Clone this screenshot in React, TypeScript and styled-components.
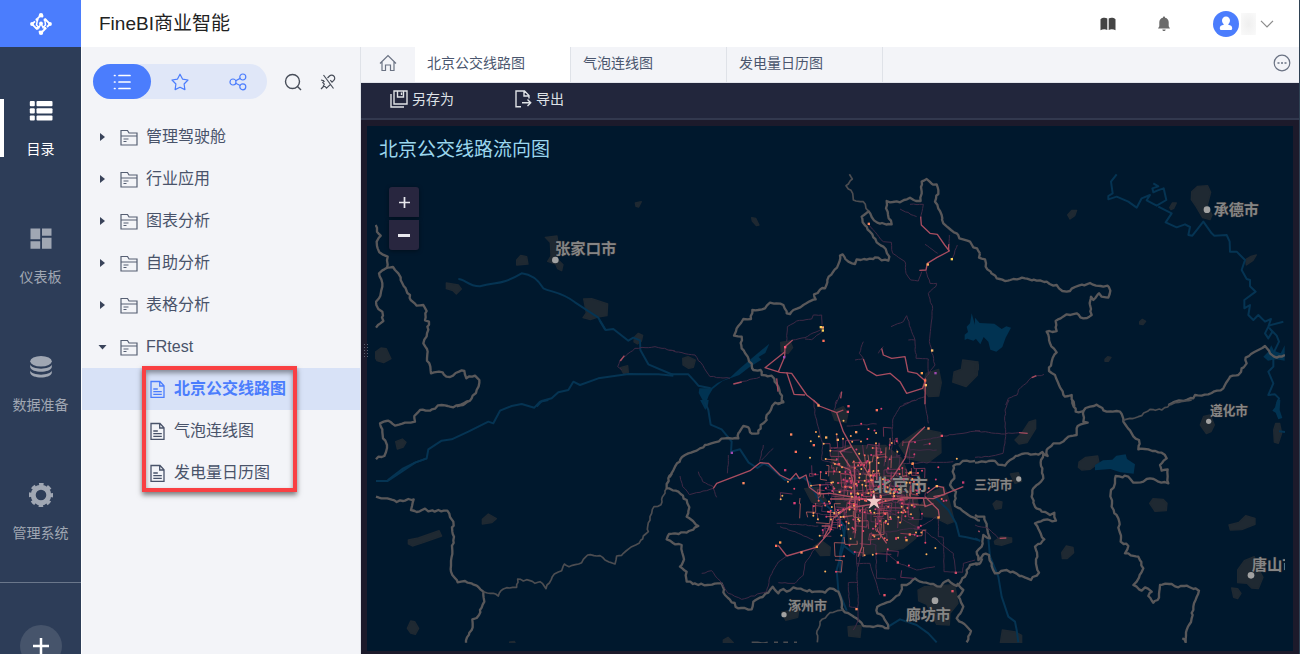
import React from 'react';
import styled, { createGlobalStyle, css } from 'styled-components';

const GlobalStyle = createGlobalStyle`
  * { box-sizing: border-box; }
  body { margin: 0; }
  button { font: inherit; color: inherit; background: none; border: 0; padding: 0; cursor: pointer; }
  svg { display: block; flex: none; }
`;

const Page = styled.div`
  display: flex;
  flex-direction: column;
  height: 100vh;
  overflow: hidden;
  background: #fff;
  border-right: 1px solid #2f4254;
  font-family: 'Liberation Sans', 'Noto Sans CJK SC', sans-serif;
  font-size: 14px;
  line-height: 20px;
  color: #3f4a60;
`;

const Header = styled.header`
  display: flex;
  align-items: center;
  flex: none;
  height: 47px;
`;

const Logo = styled.a`
  display: grid;
  place-items: center;
  width: 81px;
  height: 47px;
  background: #4b7dfd;
`;

const Title = styled.h1`
  margin: 0 auto 0 18px;
  font-size: 19px;
  line-height: 28px;
  font-weight: 400;
  color: #222;
`;

const HeaderTools = styled.div`
  display: flex;
  align-items: center;
  padding-right: 25px;
`;

const HeaderButton = styled.button`
  display: grid;
  place-items: center;
  width: 56px;
  height: 32px;
`;

const UserButton = styled.button`
  display: flex;
  align-items: center;
  margin-left: 21px;
`;

const UserName = styled.span`
  width: 15px;
  height: 22px;
  margin: 0 4px 0 2px;
  background: radial-gradient(#efefef, #fafafa);
`;

const Body = styled.div`
  display: flex;
  flex: 1;
  min-height: 0;
`;

const Sidebar = styled.nav`
  display: flex;
  flex-direction: column;
  align-items: stretch;
  width: 81px;
  flex: none;
  overflow: hidden;
  background: #2d3d58;
`;

const NavItem = styled.button<{ $active?: boolean }>`
  position: relative;
  display: flex;
  flex: none;
  flex-direction: column;
  align-items: center;
  gap: 16px;
  height: 128px;
  padding-top: 52px;
  color: ${p => (p.$active ? '#fff' : '#a0a7b3')};
  ${p => p.$active && css`
    &::before {
      content: '';
      position: absolute;
      left: 0;
      top: 52px;
      width: 4px;
      height: 58px;
      background: #fff;
    }
  `}
`;

const NavDivider = styled.hr`
  width: 100%;
  flex: none;
  margin: 23px 0 42px;
  border: 0;
  border-top: 1px solid #6a778b;
`;

const AddButton = styled.button`
  display: grid;
  flex: none;
  place-items: center;
  align-self: center;
  width: 42px;
  height: 42px;
  border-radius: 50%;
  background: #46546b;
  color: #fff;
`;

const Catalog = styled.aside`
  width: 278px;
  flex: none;
  margin-left: 1px;
  background: #f3f4f8;
`;

const CatalogTools = styled.div`
  display: flex;
  align-items: center;
  padding: 17px 11px;
`;

const Segments = styled.div`
  display: flex;
  margin-right: 8px;
  border-radius: 18px;
  background: #e0e7f8;
`;

const Segment = styled.button<{ $active?: boolean }>`
  display: grid;
  place-items: center;
  width: 58px;
  height: 35px;
  border-radius: 18px;
  background: ${p => (p.$active ? '#4b7dfd' : 'transparent')};
  color: ${p => (p.$active ? '#fff' : '#4b7dfd')};
`;

const ToolButton = styled.button`
  display: grid;
  place-items: center;
  width: 35px;
  height: 35px;
  color: #474d59;
`;

const Tree = styled.ul`
  position: relative;
  margin: 0;
  padding: 0;
  list-style: none;
`;

const Row = styled.button<{ $child?: boolean; $selected?: boolean }>`
  display: flex;
  align-items: center;
  gap: 8px;
  width: 100%;
  height: 42px;
  padding-left: ${p => (p.$child ? '68px' : '16px')};
  text-align: left;
  font-size: 16px;
  line-height: 24px;
  font-weight: ${p => (p.$selected ? 700 : 400)};
  color: ${p => (p.$selected ? '#4b7dfd' : '#49536a')};
  background: ${p => (p.$selected ? '#d8e2f7' : 'transparent')};
`;

const Expander = styled.span`
  width: 14px;
`;

const Highlight = styled.li`
  position: absolute;
  left: 60px;
  top: -2px;
  width: 155px;
  height: 126px;
  border: 4px solid #f94043;
  box-shadow: 0 3px 5px rgba(0, 0, 0, 0.5), inset 0 3px 5px rgba(0, 0, 0, 0.4);
  pointer-events: none;
`;

const Main = styled.main`
  position: relative;
  display: flex;
  flex: 1;
  flex-direction: column;
  min-width: 0;
  border-left: 1px solid #dfe2e8;
  background: #1c1a2b;
`;

const Grip = styled.div`
  position: absolute;
  left: 2px;
  top: 296px;
  width: 6px;
  height: 16px;
  background: radial-gradient(circle, #5b6070 1px, transparent 1px) 0 0 / 3px 3px;
`;

const TabBar = styled.div`
  display: flex;
  align-items: stretch;
  flex: none;
  height: 36px;
  background: #f3f4f8;
  border-bottom: 1px solid #e1e3ea;
`;

const HomeTab = styled.button`
  display: grid;
  place-items: center;
  width: 54px;
  padding-bottom: 3px;
  color: #6a7283;
`;

const Tab = styled.button<{ $active?: boolean }>`
  width: 156px;
  padding: 0 0 3px 12px;
  text-align: left;
  background: ${p => (p.$active ? '#fff' : 'transparent')};
  border-right: 1px solid #dfe2e8;
  color: #4a566e;
`;

const MoreButton = styled.button`
  margin-left: auto;
  padding: 0 8px 3px 0;
  color: #6a7283;
`;

const ActionBar = styled.div`
  display: flex;
  align-items: center;
  gap: 60px;
  flex: none;
  height: 37px;
  padding: 0 29px 3px;
  background: #22263c;
  border-bottom: 2px solid #32384e;
`;

const Action = styled.button`
  display: flex;
  align-items: center;
  gap: 4px;
  color: #dfe2e6;
`;

const Widget = styled.section`
  display: flex;
  flex: 1;
  flex-direction: column;
  min-height: 0;
  margin: 6px 6px 3px;
  padding: 9px 8px 8px;
  background: #00182d;
`;

const WidgetTitle = styled.h2`
  margin: 0 0 8px 4px;
  font-size: 19px;
  line-height: 30px;
  font-weight: 400;
  color: #9bd7ee;
`;

const MapArea = styled.div`
  position: relative;
  flex: 1;
  min-height: 0;
`;

const MapSvg = styled.svg`
  width: 100%;
  height: 100%;
`;

const ZoomControls = styled.div`
  position: absolute;
  left: 14px;
  top: 14px;
  display: flex;
  flex-direction: column;
  gap: 3px;
`;

const ZoomButton = styled.button<{ $edge: 'top' | 'bottom' }>`
  display: grid;
  place-items: center;
  width: 30px;
  height: 30px;
  border-radius: ${p => (p.$edge === 'top' ? '3px 3px 0 0' : '0 0 3px 3px')};
  background: #28263f;
  color: #e8e8ee;
  box-shadow: 0 1px 4px rgba(0, 0, 0, 0.4);
`;

/* ---------- icons ---------- */

const LogoIcon = () => (
  <svg width="24" height="24" viewBox="0 0 24 24" fill="none" stroke="#fff" strokeWidth="1.800">
    <path d="M12 3 8.500 6.700M6 9.300 3 12l5 5.200M10 19.200l2 1.800 4-4M18 15l3-3-5-5M12 3l2 2" />
    <path d="M8.500 7.500 7.500 13l2.500 2.500 2-4 2 4 2.500-2.500-.5-4" strokeWidth="1.500" />
    <g fill="#fff" stroke="none">
      <circle cx="12" cy="3.200" r="2.200" /><circle cx="12" cy="20.800" r="2.200" /><circle cx="3" cy="12" r="1.900" /><circle cx="21" cy="12" r="1.900" />
      <circle cx="12" cy="11.500" r="1.900" /><circle cx="8" cy="7.500" r="1.500" /><circle cx="16" cy="7.800" r="1.500" />
      <circle cx="8.300" cy="16.200" r="1.500" /><circle cx="16" cy="16.200" r="1.500" />
    </g>
  </svg>
);

const BookIcon = () => (
  <svg width="16" height="14" viewBox="0 0 16 14" fill="#444">
    <path d="M.5 2.200C2.500.600 5.500.500 7.300 1.600V13C5.500 12 2.500 12 .5 13.300zM8.700 1.600C10.500.500 13.500.600 15.500 2.200V13.300C13.500 12 10.500 12 8.700 13z" />
  </svg>
);

const BellIcon = () => (
  <svg width="14" height="16" viewBox="0 0 14 16" fill="#6a6a6a">
    <path d="M7 .5c.7 0 1.100.5 1.100 1.200C10.500 2.200 11.700 4 11.700 6.300v4l1.300 2.200H1l1.300-2.200v-4C2.300 4 3.500 2.200 5.900 1.700 5.900 1 6.300.5 7 .5zM5.300 13.500h3.400C8.500 14.500 7.900 15 7 15s-1.500-.5-1.700-1.500z" />
  </svg>
);

const Avatar = () => (
  <svg width="26" height="26" viewBox="0 0 26 26">
    <circle cx="13" cy="13" r="13" fill="#4b7dfd" />
    <path d="M13 5.500c2.400 0 4 1.700 4 4 0 1.500-.7 2.900-1.700 3.600v.7c2.300.5 3.900 1.400 3.900 3.200 0 1.500-.5 2-1.500 2H8.300c-1 0-1.500-.5-1.500-2 0-1.800 1.600-2.700 3.900-3.200v-.7C9.700 12.400 9 11 9 9.500c0-2.300 1.600-4 4-4z" fill="#fff" />
  </svg>
);

const ChevronIcon = () => (
  <svg width="14" height="8" viewBox="0 0 14 8" fill="none" stroke="#8b8b8b" strokeWidth="1.200">
    <path d="m1 .8 6 6 6-6" />
  </svg>
);

const DirectoryIcon = () => (
  <svg width="24" height="24" viewBox="0 0 24 24" fill="currentColor">
    {[2, 9.200, 16.400].map(y => (
      <g key={y}>
        <rect x=".8" y={y} width="5" height="5.200" rx="1" />
        <rect x="7.500" y={y} width="16" height="5.200" rx="1" />
      </g>
    ))}
  </svg>
);

const BoardIcon = () => (
  <svg width="24" height="24" viewBox="0 0 24 24" fill="currentColor">
    <path d="M1.500 1.500h9.700v10.700H1.500zM13 1.500h9.500v7.300H13zM1.500 14.300h9.700v7.500H1.500zM13 10.800h9.500v11H13z" />
  </svg>
);

const DataIcon = () => (
  <svg width="24" height="24" viewBox="0 0 24 24" fill="currentColor">
    <ellipse cx="12" cy="6.200" rx="10.800" ry="5.200" />
    <path d="M1.200 9.500c1.500 5.500 20.100 5.500 21.600 0v2.800c-1.500 6-20.100 6-21.600 0z" />
    <path d="M1.200 15.500c1.500 5.500 20.100 5.500 21.600 0v2.500c-1.500 6-20.100 6-21.600 0z" />
  </svg>
);

const GearIcon = () => (
  <svg width="24" height="24" viewBox="0 0 24 24" fill="none" stroke="currentColor">
    <circle cx="12" cy="12" r="7.800" strokeWidth="5" />
    <circle cx="12" cy="12" r="10.400" strokeWidth="3.400" strokeDasharray="4.400 3.768" strokeDashoffset="2.200" />
  </svg>
);

const PlusIcon = ({ size, weight }: { size: number; weight: number }) => (
  <svg width={size} height={size} viewBox="0 0 16 16" stroke="currentColor" strokeWidth={weight}>
    <path d="M8 0v16M0 8h16" />
  </svg>
);

const ListIcon = () => (
  <svg width="18" height="18" viewBox="0 0 18 18" fill="none" stroke="currentColor" strokeWidth="1.700" strokeLinecap="round">
    <path d="M6 2.500h11M6 9h11M6 15.500h11M1.500 2.500h.5M1.500 9h.5M1.500 15.500h.5" />
  </svg>
);

const StarIcon = () => (
  <svg width="18" height="18" viewBox="0 0 18 18" fill="none" stroke="currentColor" strokeWidth="1.200" strokeLinejoin="round">
    <path d="m9 1.200 2.500 4.900 5.500.9-3.900 4 .8 5.600L9 14.200l-4.900 2.400.8-5.600L1 7l5.500-.9z" />
  </svg>
);

const ShareIcon = () => (
  <svg width="18" height="18" viewBox="0 0 18 18" fill="none" stroke="currentColor" strokeWidth="1.200">
    <circle cx="4" cy="9" r="3" /><circle cx="13.800" cy="4" r="3" /><circle cx="13.800" cy="13.800" r="3" />
    <path d="m6.700 7.700 4.500-2.300M6.700 10.300l4.500 2.200" />
  </svg>
);

const SearchIcon = () => (
  <svg width="18" height="18" viewBox="0 0 18 18" fill="none" stroke="currentColor" strokeWidth="1.400">
    <circle cx="8.500" cy="8.500" r="7" /><path d="m13.500 13.500 3.500 3.500" />
  </svg>
);

const UnlinkIcon = () => (
  <svg width="16" height="16" viewBox="0 0 16 16" fill="none" stroke="currentColor" strokeWidth="1.200">
    <path d="M3.500 1 13.500 14.500M7.500 4l2-2a3 3 0 0 1 4.300 0 3 3 0 0 1 0 4.300L12 8.200l-1.700-2M4.500 7 2.800 8.600l1.500 1.600-1 2 2 .5 1.200 1.500 4-3.800M1 15l2.500-2.500M1 6l3 .8" />
  </svg>
);

const ArrowIcon = ({ open }: { open?: boolean }) => (
  <svg width="9" height="10" viewBox="0 0 9 10" fill="#39435a">
    {open ? <path d="M.5 3h8L4.500 7.500z" /> : <path d="M2 1l5 4-5 4z" />}
  </svg>
);

const FolderIcon = () => (
  <svg width="18" height="18" viewBox="0 0 18 18" fill="none" stroke="#565f73" strokeWidth="1.200">
    <path d="M1 17V2.500h6.500L9 5h8v12zM1 8h16M3.500 11h5M3.500 13.500h3" />
  </svg>
);

const DocIcon = () => (
  <svg width="16" height="18" viewBox="0 0 16 18" fill="none" stroke="currentColor" strokeWidth="1.300">
    <path d="M1 1.500h9L14 5.800V17.300H1zM9.700 1.500v4.500h4.300M3.300 9h4.500M3.300 11.700h8.500M3.300 14.400h8.500" />
  </svg>
);

const HomeIcon = () => (
  <svg width="18" height="18" viewBox="0 0 18 18" fill="none" stroke="currentColor" strokeWidth="1.200">
    <path d="M1 9.500 9 1.500l8 8M3 8v8.500h3.500V11h5v5.500H15V8" />
  </svg>
);

const MoreIcon = () => (
  <svg width="18" height="18" viewBox="0 0 18 18" fill="none" stroke="currentColor">
    <circle cx="9" cy="9" r="7.800" strokeWidth="1.200" />
    <path d="M4.500 9h2M8 9h2M11.500 9h2" strokeWidth="1.700" />
  </svg>
);

const SaveIcon = () => (
  <svg width="18" height="18" viewBox="0 0 18 18" fill="none" stroke="currentColor" strokeWidth="1.400">
    <path d="M4 1h13v13H4zM7.500 1v6h6V1M11.500 2.500v2.500M1 4v13h13" />
  </svg>
);

const ExportIcon = () => (
  <svg width="18" height="18" viewBox="0 0 18 18" fill="none" stroke="currentColor" strokeWidth="1.400">
    <path d="M7 16.700H2V1h8.500L15 5.500v3M10 1v5h5M8 12.700h8.500M13.500 9.500l3.200 3.200-3.200 3.200" />
  </svg>
);

/* ---------- map ---------- */

type Sheet = {
  x: number;
  y: number;
  areas: string[];
  water?: string[];
  rivers?: string[];
  borders: string[];
  minor?: string[];
  routes?: string[];
  faint?: string[];
};

const sheets: Sheet[] = [
  {
    x: -30, y: -24,
    areas: [
      'M541 217l35-4 4 28-4 40 18 18-4 18-12-6-6-14-24-8 10-16-2-40z',
      'M455 285l12-14 18 4 4 22-34 3z', 'M244 354l36 6 9 12-15 15-10-10-20-6z',
      'M656 402l24-1 48 16-2 35-28 4-22 8-22-6 10-14z', 'M811 114l18-4-8 16-8-2z',
      'M808 517l12-12 13 6-4 18-12 8-10-6z', 'M766 608l22-6 2 20-14 4z', 'M30 562l18-13 16 2 14 30-22 12-20-6-7-12z',
    ],
    rivers: [
      'M280 342C300 342 310 365 345 364C400 350 410 360 470 325C500 328 520 345 535 370C560 382 590 380 630 412L700 458 722 495 745 492 790 527 805 518 825 526 826 555 850 598 925 630',
      'M925 632L880 628 790 627 700 640 645 660 625 650 610 675 580 682 560 700 530 708 515 725', 'M703 465l18 30',
    ],
    borders: [
      'M32 180L36 200 47 212 35 230 38 250 52 268 68 275 66 308 42 325 52 365 42 400 33 410 40 432 52 440 55 468 33 488',
      'M66 308L84 306 100 325 112 355 135 390 137 405 155 422 175 420 185 438 180 466 192 470 186 505 175 535 188 560 186 580 198 625 222 620 255 636 272 624 290 616 298 618 304 640 330 632 343 645 335 675 320 700 300 716 275 724',
    ],
    faint: ['M770 615L758 605 765 585 810 550 870 545 930 558'],
    routes: ['M766 588l12-16'],
  },
  {
    x: -30, y: 681,
    areas: [
      'M92 125l20-8 11 10-8 14-18 6z', 'M130 420l30-6 62-22 8 16-56 20-32 10-12-6z',
      'M352 358l18-16 24 14-14 12-28 4z', 'M127 685l10-22 12 2 12 20-10 18-14-4z', 'M434 726l14-2 2 4h-16z',
    ],
    rivers: ['M550 0L525 5 508 23 470 12 440 18 405 32 385 70 370 65 310 95 260 118 230 122 190 148 185 175 150 188 110 215 68 243 33 243', 'M68 241l44-34 40-20 34-12'],
    borders: [
      'M310 3L285 15 265 22 230 15 195 32 165 30 148 48 150 65 90 77 70 62 45 70 52 88 54 115 66 135 58 168 40 170 33 178',
      'M33 290L60 295 95 306 130 297 146 298 138 330 155 336 180 326 190 334 247 332 265 365 262 395 267 410 260 470 258 515 278 547 300 543 335 557 355 575 358 605 345 630 342 645 322 658 320 690 306 712 303 728',
    ],
    minor: ['M355 575L385 580 400 588 415 567 455 562 458 537 475 543 485 539 510 550 525 545 543 566 568 522 590 512 598 492 612 500 650 488 668 465 705 467 720 480 750 492 755 468 770 466 800 440 822 430 835 408 850 395 848 380 855 350 867 320 888 314 890 298 905 265'],
  },
  {
    x: 885, y: -24,
    areas: [
      'M245 158l12 2 10 20-8 2-12-14z', 'M38 580l16-5 22 10-6 22-14 3-17-10z', 'M332 532l28-4 8 20-14 18-20-6z',
      'M768 625l38-12 8 40-8 40-30 2-18-26z', 'M878 585l46 6-2 40-34 34-40-14 4-30 22-8z',
    ],
    water: [
      'M298 536l-12 28-20 12 8 8-38 24-28 22-50 18-30 24-12 20-10 28-20-36 2-14 34 0 20-16 40-18 28-26 30-26z',
      'M905 445l10 34 14 4 1 30-20 14-18-6-8 4 0-16 10-8-4-16 10-10z',
    ],
    rivers: ['M-2 628L55 628 75 650 85 662 122 670'],
    borders: [
      'M322 718L340 712 325 665 305 632 275 630 272 615 250 615 235 580 215 550 215 515 192 512 200 490 220 462 243 462 247 435 285 430 300 413 340 420 350 445 360 447 370 435 400 420 437 403 432 388 450 374 465 370 472 345 505 298 510 272 518 268 535 290 555 297 560 283 610 282 625 278 635 286 655 287 658 275 640 245 620 232 600 200 578 172 575 155 595 138 612 166 630 176 665 178 648 130 650 108 690 112 720 98 738 108 752 108 755 50 770 42 785 56 800 58 805 75 795 110 815 150 820 175 860 205 868 220 900 230 930 265',
    ],
    minor: ['M538 28L547 42 528 62 548 85 550 105 580 110 595 138'],
    faint: [
      'M-2 556L75 570 120 635 180 640', 'M190 657L270 636', 'M350 530L352 485 380 468 425 462 430 450 455 450 456 480M368 525L405 518 455 492M405 522L425 524 458 498',
      'M690 132L740 155M720 118L760 118 752 160M765 238L803 265M838 210L838 240M845 282L862 240',
      'M595 178L640 230 664 232 668 265 705 290 708 325 722 345 745 348 755 320', 'M768 318L780 355 800 355 798 364 775 385 788 430 778 530 795 600 765 640',
      'M663 485L700 470 710 452 722 490 735 525 715 525M735 525L738 580 775 582 775 630M580 530L568 565 580 580M555 585L580 580',
      'M625 565L640 545M700 718L765 695', 'M498 718L514 680',
    ],
    routes: [
      'M752 155L754 180 780 205 802 208 824 240 838 258 800 278 772 295 768 315 748 316', 'M836 238L836 258',
      'M368 525L345 545 344 575 325 620', 'M345 560L285 608 330 622 365 625 410 690 445 718', 'M350 622L372 688 405 690',
      'M635 550L640 570 665 580 705 575 714 620 740 625 766 648 758 670 710 685 690 650 660 625 620 632 592 615 580 582', 'M766 640L765 718', 'M515 680L512 700M320 640L324 680', 'M190 657L215 651',
    ],
  },
  {
    x: 885, y: 681,
    areas: [
      'M485 35l35-15 14 20-6 28-34-8z', 'M694 128l60-42 58 12 1 60-40 30-60-12-26-40z',
      'M486 158l40-20 120-2 48 38 26 60 20 50 8 60-10 70-40 32-130 20-28-20-10-80-30-50-20-80z', 'M404 266l40-4 26 40-20 12-25-8z',
      'M430 440l25-18 26 20-2 24-28 1z', 'M744 570l20-10 90-6 10 56-24 30-2 35-38-2-30-60-24-10z', 'M335 636l52-8-4 24-36 9z',
      'M534 680l40-4-4 36-34-4z', 'M748 320l30-40 44-20 16 44 15 60-20 8-40-20-30-2z', 'M160 720l14-8 16 16h-30z',
    ],
    water: ['M90 0h26l-2 14-8 16z'],
    rivers: [
      'M104 5L115 30 122 74 155 88 185 125 183 155 210 148 236 188 262 204 282 190 300 200 345 240 400 232 420 250 440 290 490 335 525 380 520 440 500 510 505 570 530 632',
      'M512 365L522 400 510 460 512 520M520 436L555 463', 'M795 292L835 330 858 370 868 408 890 412 925 420', 'M655 680L690 658 740 675 775 700 800 727',
    ],
    borders: [
      'M342 3L330 10 315 8 290 45 290 60 272 75 265 100 240 97 235 82 220 78 205 100 205 115 165 115 105 135 80 152 45 165 15 200 0 230 5 222 -5 235 -10 265 25 275 50 300 58 322 50 350 85 378 50 398 15 400 -3 402 -10 418 15 433 35 435 42 478 30 500 50 515 50 545 85 555 155 550 165 585 205 625 245 628 250 605 295 578 308 560 325 580 340 567 350 575 370 562 400 570 465 578 480 565 505 575 520 632 560 655 580 678 630 678 655 685 640 650 622 640 622 620 660 605 692 575 695 555 710 555 735 535 750 545 790 552 812 560 820 548 835 540 860 558 885 530 900 495 930 492',
      'M915 183L890 182 850 198 848 215 853 235 840 255 858 275 855 318 870 325 895 345 930 362', 'M860 550L880 570 865 590 880 620 860 655 903 693 890 727',
    ],
    minor: ['M520 630L480 638 450 665 440 700 442 727', 'M245 727L293 727M312 727L324 727M340 727L354 727M372 727L381 727'],
    faint: [
      'M432 0L434 40 458 130 455 180 485 188', 'M500 0L492 30M530 78L620 72', 'M735 0L690 20 668 60 664 190', 'M765 0L770 40 775 70', 'M930 92L820 108 720 128',
      'M700 190L850 185', 'M600 432L618 435 620 535 678 538', 'M560 460L565 660 550 690', 'M535 548L562 548M535 548L538 620 560 622', 'M600 490L612 530 630 585', 'M560 490L600 490',
      'M280 135L268 185M275 180L310 145M85 215L98 245 130 260M30 228L38 260 58 284 130 265 140 292M175 165L172 220', 'M95 520L125 512 155 550 175 580 215 598 290 575 300 530 325 486',
      'M330 380L375 395 430 420M320 370L445 378M440 440L405 490 400 525 375 550 325 548', 'M650 460L685 488 740 510 795 500', 'M805 350L805 410 820 412 822 515 878 517 880 490 915 480', 'M745 385L800 350M760 390L850 460 857 518',
      'M425 340L500 345M430 310L480 312 485 290', 'M720 122L718 190M720 150L800 150', 'M578 420L565 500', 'M630 400L720 385 745 385M650 330L745 385', 'M325 486L350 468',
    ],
    routes: [
      'M430 0L448 18 500 38 520 95 545 140 600 230 612 262', 'M130 265L140 250 240 212 270 188 295 190 330 225 360 240 378 220 388 236 408 225 418 262 445 282 480 280',
      'M765 80L718 125 705 175 668 232 640 260', 'M350 468L438 442 480 395 490 355 530 325 610 312 700 292 790 296 880 260', 'M620 140L620 240', 'M578 320L576 440 564 470',
      'M350 468L325 436', 'M620 388L650 430', 'M490 345L545 318M765 290L805 330 808 352', 'M480 280L600 300M520 30L500 38', 'M488 188L540 210 552 260M545 140L510 155 540 200',
      'M480 297L700 297M553 190L556 400M455 378L480 378 460 415', 'M700 294L760 294 765 320 790 310M770 280L800 258 820 262 824 284 790 290',
    ],
  },
  {
    x: 1800, y: -24,
    areas: [
      'M650 80l18-16 30-2 9 20-10 38 14 30-6 14-22-6-20-34-14-20z', 'M278 150l12-14 15 0-6 16-14 10z', 'M584 128l8-14 12 0-8 16-8 4z',
      'M812 284l16-10 16-4-10 16-20 14z', 'M494 470l8-7 10 6-8 10-10-2z', 'M390 583l8-8 10 2-8 12-10 0z', 'M0 590l10 8 0 16-10 8z',
    ],
    water: ['M0 458l14 16 44 2 22 16 14-8 14 4-16 30-10 28-18 14-18-6-6-24-14-14-10 22-16-20z', 'M865 575l14-14 10-20 8 16 20 8 12-24v46l-24-4-26 4z'],
    rivers: [
      'M425 28L408 50 413 85 400 93 400 103 425 95 460 110 485 128 500 100 525 90 515 106 545 122 574 105 566 70 548 76 535 82 532 70 550 64 535 55',
      'M550 125L590 145 572 172 605 187 630 178 645 186 640 210 652 212 685 170 710 205 718 212 755 210 764 230 765 260 785 260 810 285 800 315 815 342 825 345 825 364 842 380 808 405 808 430 825 420 820 450 835 465 850 450 870 470 888 462 880 485 870 505 880 520 892 500 884 490 905 512 912 530 895 565',
      'M880 482L925 470', 'M895 580L895 605 880 620 895 655 880 690 900 688 912 700 905 720',
    ],
    borders: [
      'M15 265L12 278 30 283 32 305 65 340 90 348 115 342 150 340 215 350 235 362 245 360 262 378 285 378 300 366 345 354 385 365 398 362 406 377 400 398 380 395 372 385 355 405 348 395 345 420 350 450 325 460 305 445 275 448 242 468 245 498 215 500 225 535 245 562 230 590 222 618 240 630 252 660 270 695 290 690 298 724',
      'M580 720L600 710 655 700 660 690 700 688 745 670 765 635 790 630 815 595 812 578 850 555 870 543 885 565 905 578 930 570',
    ],
    faint: ['M92 720L100 700 126 690 130 675 170 638 207 628'],
    routes: ['M170 638l14-6'],
  },
  {
    x: 1800, y: 681,
    areas: [
      'M120 120l20-20 22-34 20-6 0 26-26 42-24 4z', 'M312 186l20-14 36-4 4 20-26 20-26 2-10-8z', 'M106 222l24-4 10 26-20 6z', 'M54 312l10-10 17 4-2 18-18 4z',
      'M58 424l20-14 32 4 0 12-30 10-20-4z', 'M260 458l14-20 20 4 2 16-20 18-14 0z', 'M76 728l6-38 40 6 18 10v22z',
      'M524 310l10-14 30 2 12 12-2 22-34 2z', 'M762 375l30-8 20-20 28 8 0 18-40 16-34 1z', 'M676 75l10-26 20-4 12 30-10 20-14 6z', 'M896 90l6-20 12 0 6 30-10 30-12-4z',
      'M788 510l20-28 30-12 14 40 12 22-14 34-20-2-14-14-28-2z', 'M770 564l18 2 10 14-10 16-12-4z',
    ],
    water: ['M360 195l24-14 28-2 12-12 28-4 4 14 24 16-4 28-40-4-30-10-46 4z', 'M906 0h10l-2 30 8 24-12 4-8-20-10-6 8-10z'],
    rivers: ['M40 415L45 470 70 530 80 590 100 650 120 665 125 690 130 727', 'M0 415l16 8', 'M912 94l18 2'],
    borders: [
      'M292 0L302 35 325 33 325 65 338 68 308 78 305 105 280 110 255 130 235 130 215 150 218 168 202 156 190 164 140 162 115 175 90 197 70 194 60 183 0 188',
      'M205 160L198 180 205 235 175 265 170 290 180 320 200 335 225 345 238 338 243 362 205 360 180 370 208 418 180 440 187 470 185 500 192 518 168 540 95 510 60 520 50 490 42 465 25 463 10 480 5 455 20 440 25 405 45 415 35 380 28 350 15 350 0 345', 'M0 492L15 490 22 475',
      'M325 33L345 20 365 14 395 35 425 33 440 42 445 65 470 100 492 120 490 148 520 148 560 158 575 175 555 195 560 212 578 208 580 250 550 245 525 235 505 245 475 248 460 230 422 228 420 250 408 270 410 320 430 355 437 425 460 438 450 460 490 470 505 505 485 545 475 555 500 572 510 562 530 575 520 588 535 608 548 600 555 555 590 552 610 562 635 557 672 572 655 620 650 655 635 690 632 727 622 715',
    ],
    minor: ['M445 62L490 50 525 28 560 30 600 8 650 0'],
    faint: ['M102 0L90 30 92 110 84 160 50 168 0 172', 'M0 92L80 102 132 98', 'M0 375L40 385 70 415'],
    routes: ['M132 98l26 2', 'M74 415l20-1', 'M10 392l4 4'],
  },
];

const labels = [
  { text: '张家口市', x: 540, y: 244, size: 46 },
  { text: '承德市', x: 2516, y: 125, size: 45 },
  { text: '北京市', x: 1496, y: 956, size: 54 },
  { text: '涿州市', x: 1239, y: 1311, size: 39 },
  { text: '廊坊市', x: 1592, y: 1340, size: 45 },
  { text: '三河市', x: 1798, y: 947, size: 38 },
  { text: '遵化市', x: 2505, y: 727, size: 38 },
  { text: '唐山市', x: 2630, y: 1191, size: 46 },
];

const towns = [[541, 261, 10], [2496, 110, 10], [1227, 1325, 8], [1680, 1283, 10], [1931, 918, 8], [2501, 745, 8], [2628, 1207, 10]];

/* Stop lights outside the dense centre. */
const stops = [
  [1343, 463, '#ffa36a'], [1343, 472, '#ffd257'], [1337, 462, '#ffd257'], [1345, 503, '#ff705a'], [1481, 152, '#ff8a62'], [1730, 258, '#ffd257'], [1658, 274, '#ffb060'],
  [1671, 532, '#ffc06a'], [1640, 600, '#ffa050'], [1652, 636, '#ffc06a'], [1650, 622, '#ff7050'], [1681, 600, '#a04ab0'], [1230, 522, '#ff5577'], [1227, 552, '#a04ab0'],
  [1248, 784, '#ff8a62'], [1262, 836, '#ff705a'], [1353, 793, '#ffb060'], [1316, 816, '#ff705a'], [1388, 800, '#ffb060'], [1505, 711, '#ff705a'], [1660, 766, '#ff9b62'],
  [1700, 788, '#e85368'], [1070, 839, '#a04ab0'], [1258, 990, '#e0407a'], [1105, 930, '#ff8a62'], [1215, 1108, '#ff9b50'], [1203, 1118, '#ff705a'], [1279, 1138, '#ff8a62'],
  [1325, 1121, '#ff9b50'], [1444, 1308, '#ff8a62'], [1528, 1266, '#e85368'], [1568, 1168, '#e85368'], [1742, 1199, '#c84a68'], [1732, 1254, '#e85368'],
  [1594, 1101, '#ffa050'], [1604, 1084, '#ff705a'], [1630, 1063, '#c83c70'], [1690, 1033, '#ff9b50'], [1685, 939, '#ffb060'], [1764, 928, '#c83c70'], [1230, 891, '#c83c70'],
  [1330, 697, '#ff9b62'], [1420, 699, '#e85368'], [1443, 777, '#ff9b62'], [1418, 716, '#e85368'], [1606, 898, '#ffb060'], [1612, 872, '#ff8a50'],
] as [number, number, string][];

const random = (seed: number) => () => {
  seed = (seed * 16807) % 2147483647;
  return seed / 2147483647;
};

/* Breaks each segment of an M/L path into short irregular steps, as surveyed boundaries have. */
const rugged = (d: string, amount: number) => {
  const next = random(d.length * 977 + 13);
  return d.split('M').filter(Boolean).map(part => {
    const n = part.replace('L', ' ').trim().split(/\s+/).map(Number);
    let out = `M${n[0]} ${n[1]}L`;
    for (let i = 2; i < n.length; i += 2) {
      const [x0, y0, x1, y1] = [n[i - 2], n[i - 1], n[i], n[i + 1]];
      const steps = Math.max(1, Math.round(Math.hypot(x1 - x0, y1 - y0) / 10));
      for (let k = 1; k < steps; k++) {
        const x = x0 + ((x1 - x0) * k) / steps + (next() - 0.5) * amount;
        const y = y0 + ((y1 - y0) * k) / steps + (next() - 0.5) * amount;
        out += `${Math.round(x)} ${Math.round(y)} `;
      }
      out += `${x1} ${y1} `;
    }
    return out;
  }).join('');
};

const buildCity = () => {
  const next = random(20231);
  const bell = () => (next() + next() + next() - 1.5) / 1.5;
  const lines: { d: string; color: string }[] = [];
  const dots: { x: number; y: number; color: string; r: number }[] = [];
  const lineColors = ['#7a3158', '#a83d5b', '#8f3a58', '#c9605f', '#5c2f52'];
  const dotColors = ['#ff9c55', '#ffb35c', '#f4655d', '#e8456a', '#d43d74'];
  for (let i = 0; i < 260; i++) {
    let x = Math.round(1482 + bell() * 260);
    let y = Math.round(962 + bell() * 250);
    let d = `M${x} ${y}`;
    const turns = 1 + Math.floor(next() * 3);
    for (let t = 0; t < turns; t++) {
      const run = Math.round((next() - 0.5) * 90);
      const skew = Math.round((next() - 0.5) * 8);
      if ((i + t) % 2) { x += run; y += skew; } else { x += skew; y += run; }
      d += `L${x} ${y}`;
    }
    lines.push({ d, color: lineColors[Math.floor(next() * 5)] });
    if (i % 2) dots.push({ x, y, color: dotColors[Math.floor(next() * 5)], r: 3 });
  }
  for (let i = 0; i < 150; i++) {
    dots.push({ x: 1480 + bell() * 310, y: 955 + bell() * 290, color: dotColors[Math.floor(next() * 5)], r: 3 });
  }
  return { lines, dots };
};

const city = buildCity();

const FlowMap = () => (
  <MapSvg viewBox="0 0 2730 1410" role="img" aria-label="北京公交线路流向图" fontFamily="'Noto Sans CJK SC', sans-serif">
    {sheets.map((s, i) => (
      <g key={i} transform={`translate(${s.x} ${s.y})`} fill="none" strokeLinejoin="round">
        <g fill="#1f2932" stroke="#1f2932" strokeWidth="4">{s.areas.map(d => <path key={d} d={d} />)}</g>
        <g fill="#013352">{s.water?.map(d => <path key={d} d={d} />)}</g>
        <g stroke="#053453" strokeWidth="6">{s.rivers?.map(d => <path key={d} d={d} />)}</g>
      </g>
    ))}
    {sheets.map((s, i) => (
      <g key={i} transform={`translate(${s.x} ${s.y})`} fill="none" strokeLinejoin="round">
        <g stroke="#59585a" strokeWidth="7">{s.borders.map(d => <path key={d} d={rugged(d, 6)} />)}</g>
        <g stroke="#4c4d51" strokeWidth="5">{s.minor?.map(d => <path key={d} d={rugged(d, 5)} />)}</g>
        <g stroke="#3f2945" strokeWidth="3">{s.faint?.map(d => <path key={d} d={rugged(d, 3)} />)}</g>
      </g>
    ))}
    <g fill="none" strokeWidth="3">
      {city.lines.map(l => <path key={l.d} d={l.d} stroke={l.color} opacity="0.75" />)}
    </g>
    {sheets.map((s, i) => (
      <g key={i} transform={`translate(${s.x} ${s.y})`} fill="none" stroke="#a84d60" strokeWidth="4" strokeLinejoin="round">
        {s.routes?.map(d => <path key={d} d={d} />)}
      </g>
    ))}
    <g fill="#858585" stroke="#20262e" strokeWidth="3" paintOrder="stroke" fontWeight="700">
      {labels.map(l => <text key={l.text} x={l.x} y={l.y} fontSize={l.size}>{l.text}</text>)}
    </g>
    <g fill="#a2a2a2">{towns.map(([x, y, r]) => <circle key={x} cx={x} cy={y} r={r} />)}</g>
    {city.dots.map((d, i) => <circle key={i} cx={d.x} cy={d.y} r={d.r} fill={d.color} />)}
    {stops.map(([x, y, color], i) => <rect key={i} x={x - 3} y={y - 3} width="7" height="7" fill={color} />)}
    <path d="M1497 961l5 17h18l-14 10 7 19-16-12-16 12 7-19-14-10h18z" fill="#efc8c8" />
  </MapSvg>
);

/* ---------- page ---------- */

const navItems = [
  { label: '目录', icon: <DirectoryIcon />, active: true },
  { label: '仪表板', icon: <BoardIcon /> },
  { label: '数据准备', icon: <DataIcon /> },
  { label: '管理系统', icon: <GearIcon /> },
];

const folders = ['管理驾驶舱', '行业应用', '图表分析', '自助分析', '表格分析', 'FRtest'];
const reports = ['北京公交线路图', '气泡连线图', '发电量日历图'];

export default function App() {
  return (
    <Page>
      <GlobalStyle />
      <Header>
        <Logo href="#" aria-label="FineBI"><LogoIcon /></Logo>
        <Title>FineBI商业智能</Title>
        <HeaderTools>
          <HeaderButton aria-label="帮助"><BookIcon /></HeaderButton>
          <HeaderButton aria-label="消息"><BellIcon /></HeaderButton>
          <UserButton aria-label="用户">
            <Avatar />
            <UserName />
            <ChevronIcon />
          </UserButton>
        </HeaderTools>
      </Header>
      <Body>
        <Sidebar>
          {navItems.map(item => (
            <NavItem key={item.label} $active={item.active}>
              {item.icon}
              <span>{item.label}</span>
            </NavItem>
          ))}
          <NavDivider />
          <AddButton aria-label="新建"><PlusIcon size={16} weight={2.500} /></AddButton>
        </Sidebar>
        <Catalog>
          <CatalogTools>
            <Segments>
              <Segment $active aria-label="列表"><ListIcon /></Segment>
              <Segment aria-label="收藏"><StarIcon /></Segment>
              <Segment aria-label="分享"><ShareIcon /></Segment>
            </Segments>
            <ToolButton aria-label="搜索"><SearchIcon /></ToolButton>
            <ToolButton aria-label="取消固定"><UnlinkIcon /></ToolButton>
          </CatalogTools>
          <Tree>
            {folders.map(name => (
              <li key={name}>
                <Row>
                  <Expander><ArrowIcon open={name === 'FRtest'} /></Expander>
                  <FolderIcon />
                  {name}
                </Row>
              </li>
            ))}
          </Tree>
          <Tree>
            {reports.map((name, i) => (
              <li key={name}>
                <Row $child $selected={i === 0}>
                  <DocIcon />
                  {name}
                </Row>
              </li>
            ))}
            <Highlight aria-hidden />
          </Tree>
        </Catalog>
        <Main>
          <TabBar>
            <HomeTab aria-label="首页"><HomeIcon /></HomeTab>
            {reports.map((name, i) => <Tab key={name} $active={i === 0}>{name}</Tab>)}
            <MoreButton aria-label="更多"><MoreIcon /></MoreButton>
          </TabBar>
          <ActionBar>
            <Action><SaveIcon />另存为</Action>
            <Action><ExportIcon />导出</Action>
          </ActionBar>
          <Widget>
            <WidgetTitle>北京公交线路流向图</WidgetTitle>
            <MapArea>
              <FlowMap />
              <ZoomControls>
                <ZoomButton $edge="top" aria-label="放大"><PlusIcon size={11} weight={2.500} /></ZoomButton>
                <ZoomButton $edge="bottom" aria-label="缩小">
                  <svg width="12" height="3" viewBox="0 0 12 3"><path d="M0 0h12v3H0z" fill="currentColor" /></svg>
                </ZoomButton>
              </ZoomControls>
            </MapArea>
          </Widget>
          <Grip />
        </Main>
      </Body>
    </Page>
  );
}
